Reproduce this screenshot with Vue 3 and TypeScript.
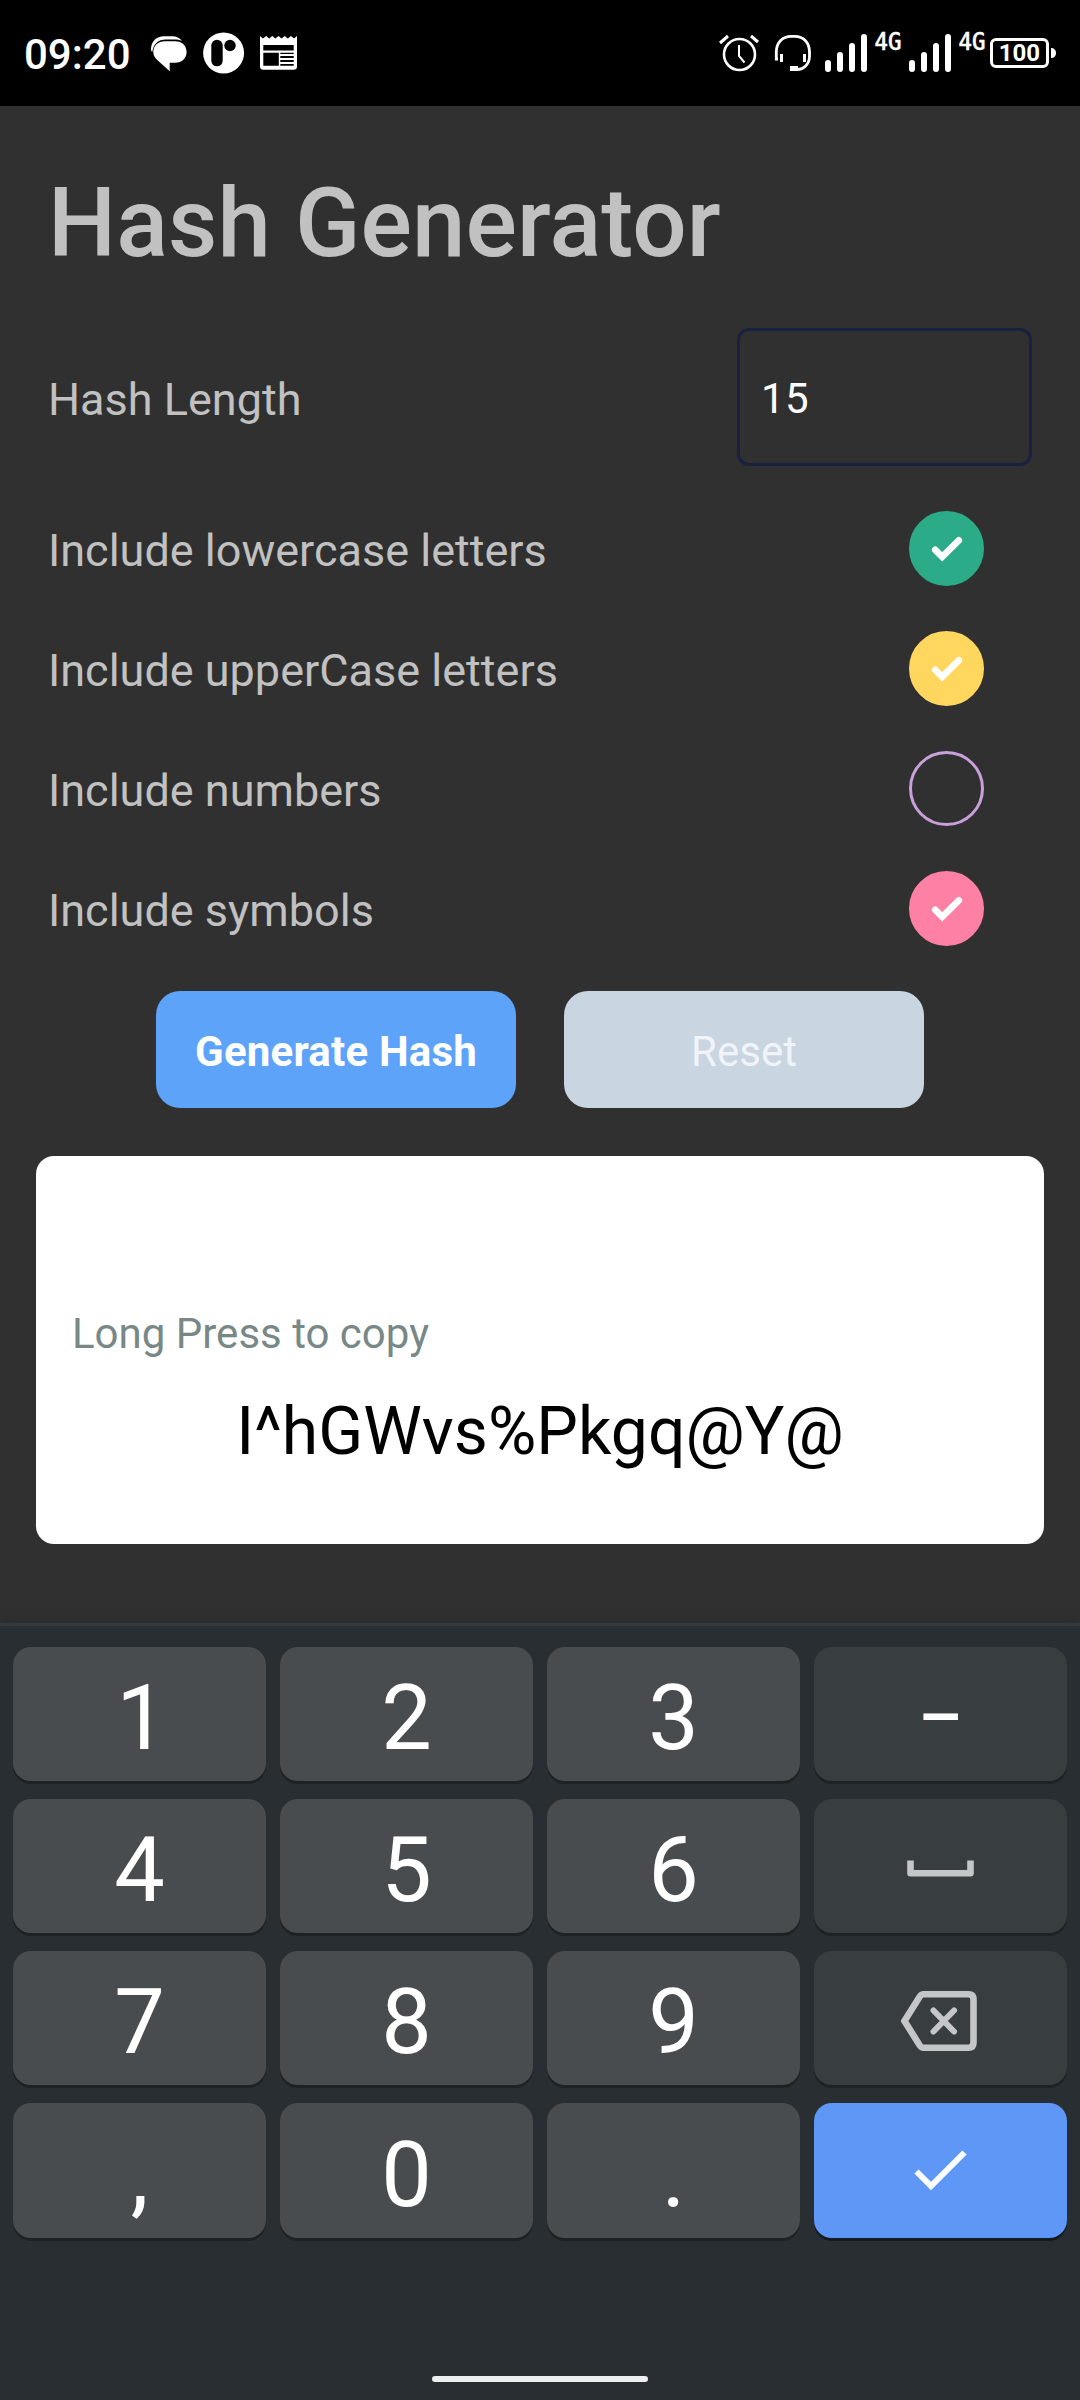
<script setup lang="ts">
import { ref } from 'vue'

interface Option {
  label: string
  color: string
  checked: boolean
}

interface Key {
  id: string
  kind: 'digit' | 'side' | 'enter'
  text?: string
}

const hashLength = ref('15')
const generated = ref('I^hGWvs%Pkgq@Y@')

const options = ref<Option[]>([
  { label: 'Include lowercase letters', color: '#2bab87', checked: true },
  { label: 'Include upperCase letters', color: '#ffd75e', checked: true },
  { label: 'Include numbers', color: '#c9a0dc', checked: false },
  { label: 'Include symbols', color: '#ff80a5', checked: true },
])

const digit = (text: string): Key => ({ id: text, kind: 'digit', text })

const keys: Key[] = [
  digit('1'), digit('2'), digit('3'), { id: 'dash', kind: 'side', text: '–' },
  digit('4'), digit('5'), digit('6'), { id: 'space', kind: 'side' },
  digit('7'), digit('8'), digit('9'), { id: 'backspace', kind: 'side' },
  digit(','), digit('0'), digit('.'), { id: 'enter', kind: 'enter' },
]
</script>

<template>
  <div class="screen">
    <header class="status">
      <span class="clock">09:20</span>
      <svg class="bubble" width="37" height="36" viewBox="151 36 37 36">
        <path fill="#fff" d="M151 49.500C151 41.500 156.500 36.300 164 36.300H172C176.500 36.300 180 38 182 41C179.500 39.900 177 39.600 174 39.600H166C158 39.600 153.500 44 152.300 52C151.400 51.300 151 50.500 151 49.500Z" />
        <path fill="#fff" d="M165 41.300H175C182 41.300 186.600 45.800 186.600 52C186.600 58.200 182 62.700 175 62.700H169.700V71.200L157.500 60.300C154.500 57.700 153.300 55.200 153.300 52C153.300 45.800 158 41.300 165 41.300Z" />
      </svg>
      <svg class="disc" width="42" height="42" viewBox="203 31.500 42 42">
        <circle cx="223.600" cy="52.500" r="20.500" fill="#fff" />
        <rect x="211.300" y="39.300" width="11.400" height="26.500" rx="5.700" />
        <circle cx="230" cy="45" r="5.700" />
      </svg>
      <svg class="news" width="37" height="34" viewBox="260 36 37 34">
        <path fill="#fff" d="M260 36L263 38.500L266.100 36L269.200 38.500L272.300 36L275.400 38.500L278.500 36L281.600 38.500L284.700 36L287.800 38.500L290.900 36L294 38.500L297 36V66.500Q297 69.800 293.500 69.800H263.500Q260 69.800 260 66.500Z" />
        <path d="M263.300 45H293.700V50.400H263.300ZM263.300 52.700H278.800V65.800H263.300ZM280.300 52.700H293.700V54H280.300ZM280.300 56H293.700V58H280.300ZM280.300 60H293.700V62H280.300ZM280.300 64H293.700V65.800H280.300Z" />
      </svg>
      <div class="spacer"></div>
      <svg width="40" height="38" viewBox="719 34 40 38" fill="none" stroke="#fff">
        <circle cx="739.500" cy="54.500" r="15.500" stroke-width="2.600" />
        <path d="M720 43L728 36M751 36L758 42" stroke-width="3" />
        <path d="M739 45V56L744.500 62.500" stroke-width="2" />
      </svg>
      <svg class="headset" width="38" height="38" viewBox="774 34 38 38">
        <path fill="none" stroke="#fff" stroke-width="2.800" d="M778 59H776.300V52C776.300 42 783 36.300 791 36.300H795C803 36.300 809.500 42 809.500 52V56C809.500 64 804 69.500 797 69.500" />
        <path fill="#fff" d="M780 54H783V62H780ZM803 54H806V62H803ZM790 66H798V71H790Z" />
      </svg>
      <template v-for="n in 2" :key="n">
        <svg class="bars" width="42" height="38" viewBox="825 34 42 38" stroke="#fff" stroke-width="6" stroke-linecap="round">
          <path d="M828 63V69M840 55V69M852 46V69M864 37V69" />
        </svg>
        <svg class="net" width="28" height="32" viewBox="0 0 28 32">
          <text x="0.500" y="24" textLength="27" lengthAdjust="spacingAndGlyphs">4G</text>
        </svg>
      </template>
      <svg class="battery" width="67" height="32" viewBox="989 37 67 32">
        <rect x="991.500" y="39.500" width="56" height="27" rx="4.500" fill="none" stroke="#fff" stroke-width="3" />
        <path fill="#fff" d="M1051 48C1054 48 1056 50 1056 53C1056 56 1054 58 1051 58Z" />
        <text x="1019.300" y="61" text-anchor="middle">100</text>
      </svg>
    </header>

    <main class="app">
      <h1>Hash Generator</h1>
      <div class="length-row">
        <label for="len">Hash Length</label>
        <input id="len" v-model="hashLength" type="text" inputmode="numeric" />
      </div>
      <div v-for="o in options" :key="o.label" class="option">
        <span>{{ o.label }}</span>
        <button
          type="button"
          class="check"
          :style="{ borderColor: o.color, background: o.checked ? o.color : 'transparent' }"
          @click="o.checked = !o.checked"
        >
          <svg v-if="o.checked" width="75" height="75" viewBox="0 0 75 75">
            <path d="M26.200 38.800L33.200 45.800L49.800 29.300" fill="none" stroke="#fff" stroke-width="6.600" stroke-linecap="round" />
          </svg>
        </button>
      </div>
      <div class="actions">
        <button type="button" class="generate">Generate Hash</button>
        <button type="button" class="reset">Reset</button>
      </div>
      <section class="card">
        <p class="hint">Long Press to copy</p>
        <p class="result">{{ generated }}</p>
      </section>
    </main>

    <footer class="keyboard">
      <div class="keys">
        <button v-for="k in keys" :key="k.id" type="button" class="key" :class="[k.kind, 'k-' + k.id]">
          <template v-if="k.text">{{ k.text }}</template>
          <svg v-else-if="k.id === 'space'" width="68" height="18" viewBox="0 0 68 18">
            <path d="M3.500 1.500V14.300H63.500V1.500" fill="none" stroke="#c5c6c8" stroke-width="6.600" stroke-linejoin="round" />
          </svg>
          <svg v-else-if="k.id === 'backspace'" width="76" height="60" viewBox="0 0 76 60" fill="none" stroke="#c5c6c8">
            <path d="M22.500 3.300H67.500Q72.500 3.300 72.500 8.300V51.700Q72.500 56.700 67.500 56.700H22.500Q20.300 56.700 18.800 54.500L3.500 30L18.800 5.500Q20.300 3.300 22.500 3.300Z" stroke-width="6.600" />
            <path d="M32.500 19.500L53 40.500M53 19.500L32.500 40.500" stroke-width="6" stroke-linecap="round" />
          </svg>
          <svg v-else width="53" height="41" viewBox="0 0 53 41">
            <path d="M2.500 21.500L17 36L50.500 2.500" fill="none" stroke="#fff" stroke-width="6" />
          </svg>
        </button>
      </div>
      <div class="home"></div>
    </footer>
  </div>
</template>

<style>
body {
  margin: 0;
  background: #2a2f33;
}
</style>

<style scoped>
.screen {
  width: 1080px;
  height: 2400px;
  display: flex;
  flex-direction: column;
  overflow: hidden;
  background: #303030;
  font-family: Roboto, "Liberation Sans", sans-serif;
}
.screen * {
  box-sizing: border-box;
}
button,
input {
  font-family: inherit;
  border: 0;
  margin: 0;
  padding: 0;
  outline: none;
}
.status {
  height: 106px;
  flex: none;
  display: flex;
  align-items: flex-start;
  padding: 34px 24px 0;
  background: #000;
  color: #fff;
}
.clock {
  width: 127px;
  padding-top: 1px;
  font-size: 42px;
  font-weight: 500;
  line-height: 40px;
  white-space: nowrap;
}
.bubble {
  margin-top: 2px;
}
.disc {
  margin: -2px 15px 0;
}
.news {
  margin-top: 2px;
}
.spacer {
  flex: 1;
}
.headset {
  margin-left: 15px;
}
.bars {
  margin-left: 13px;
}
.net {
  margin: -8px 0 0 7px;
}
.net + .bars {
  margin-left: 7px;
}
.net text {
  font: 24px "DejaVu Sans Mono", monospace;
  fill: #fff;
  stroke: #fff;
  stroke-width: 0.7px;
}
.battery {
  margin: 3px 0 0 3px;
}
.battery text {
  font-size: 24px;
  font-weight: 700;
  fill: #fff;
}
.app {
  height: 1517px;
  flex: none;
  padding: 60px 36px 0;
  color: #c1c1c1;
}
h1 {
  margin: 0 12px 47px;
  font-size: 96px;
  font-weight: 500;
  line-height: 115px;
  letter-spacing: 0.1px;
}
.length-row {
  display: flex;
  align-items: center;
  justify-content: space-between;
  margin: 0 12px;
  height: 138px;
}
.length-row label,
.option span {
  font-size: 45px;
  line-height: 60px;
  padding-top: 5px;
}
.length-row input {
  width: 295px;
  height: 138px;
  padding: 2px 21px 0;
  border: 3px solid #18213f;
  border-radius: 12px;
  background: transparent;
  color: #fff;
  font-size: 42px;
  letter-spacing: 0.4px;
}
.option {
  display: flex;
  align-items: center;
  justify-content: space-between;
  height: 75px;
  margin: 45px 60px 0 12px;
}
.check {
  width: 75px;
  height: 75px;
  border: 3px solid;
  border-radius: 50%;
}
.check svg {
  display: block;
  margin: -3px;
}
.actions {
  display: flex;
  justify-content: center;
  gap: 48px;
  margin-top: 45px;
}
.actions button {
  width: 360px;
  height: 117px;
  padding-top: 3px;
  border-radius: 24px;
  font-size: 42px;
}
.actions .generate {
  background: #5ea3fa;
  color: #fff;
  font-weight: 700;
  letter-spacing: 0.2px;
}
.actions .reset {
  background: #c9d5e1;
  color: #f0f3f7;
}
.card {
  height: 388px;
  margin-top: 48px;
  padding: 153px 36px 0;
  border-radius: 18px;
  background: #fff;
}
.card p {
  margin: 0;
}
.hint {
  font-size: 42px;
  line-height: 50px;
  color: #788887;
}
.card .result {
  margin-top: 34px;
  font-size: 66px;
  line-height: 78px;
  text-align: center;
  letter-spacing: 0.05px;
  color: #000;
}
.keyboard {
  flex: 1;
  display: flex;
  flex-direction: column;
  align-items: center;
  justify-content: space-between;
  padding: 21px 13px 18px;
  border-top: 3px solid #343b40;
  background: #292e32;
  box-shadow: 0 -3px 14px rgba(0, 0, 0, 0.1);
}
.keys {
  display: grid;
  grid-template-columns: repeat(4, 253px);
  grid-template-rows: repeat(3, 134px) 135px;
  gap: 18px 14px;
}
.key {
  display: flex;
  align-items: center;
  justify-content: center;
  border-radius: 18px;
  background: #494c4e;
  box-shadow: 0 3px 0 #1e2225;
  color: #fff;
  font-size: 90px;
  line-height: 106px;
  padding-top: 10px;
}
.k-1 {
  padding-left: 4px;
}
.side {
  background: #383d40;
}
.enter {
  background: #5e97f6;
  box-shadow: 0 3px 0 #171b20;
}
.k-dash {
  padding-top: 8px;
  font-size: 69px;
  font-weight: 500;
}
.k-space {
  padding: 4px 0 0;
}
.k-backspace {
  padding: 6px 4px 0 0;
}
.k-enter {
  padding: 0 1px 0 0;
}
.home {
  width: 216px;
  height: 6px;
  border-radius: 3px;
  background: #eeefef;
}
</style>
